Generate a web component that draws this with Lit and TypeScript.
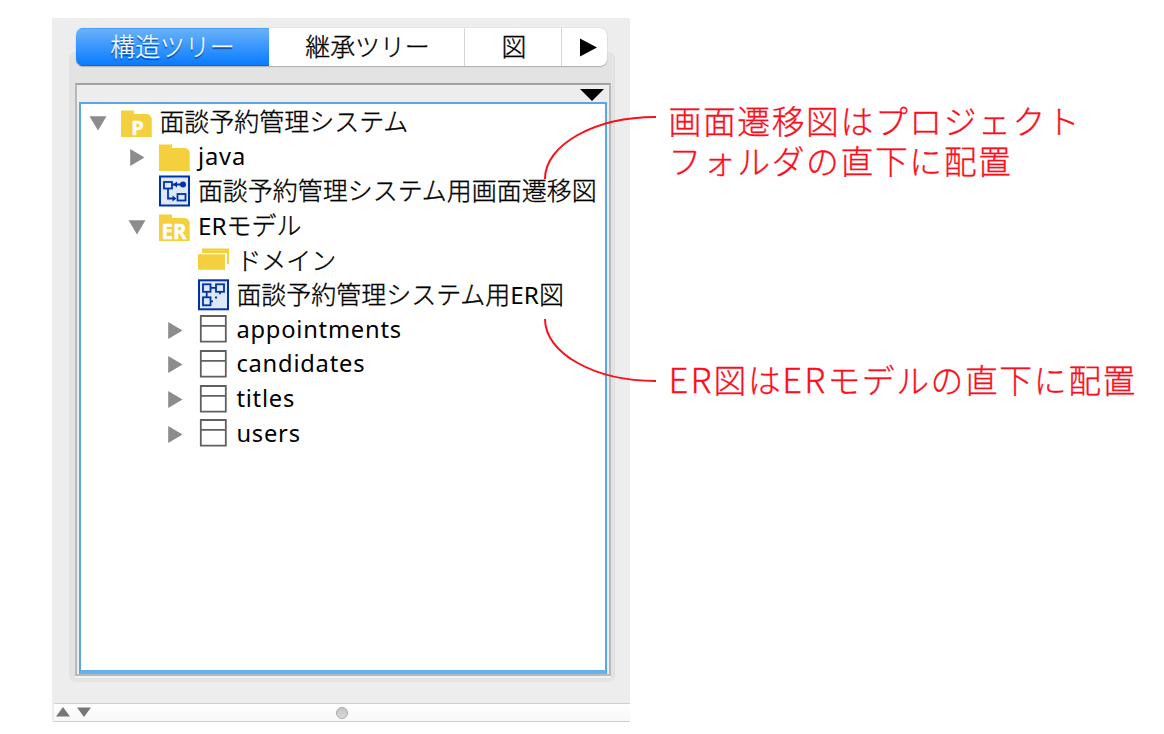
import { LitElement, html, css, svg } from "lit";
import { customElement, property } from "lit/decorators.js";

type IconKind = "project" | "folder" | "er" | "transition" | "domain" | "erdiagram" | "table";

interface Row {
  depth: number;
  arrow: "down" | "right" | "";
  icon: IconKind;
  label: string;
  kind?: string;
}

const ROWS: Row[] = [
  { depth: 0, arrow: "down", icon: "project", label: "面談予約管理システム" },
  { depth: 1, arrow: "right", icon: "folder", label: "java", kind: "java" },
  { depth: 1, arrow: "", icon: "transition", label: "面談予約管理システム用画面遷移図" },
  { depth: 1, arrow: "down", icon: "er", label: "ERモデル" },
  { depth: 2, arrow: "", icon: "domain", label: "ドメイン" },
  { depth: 2, arrow: "", icon: "erdiagram", label: "面談予約管理システム用ER図" },
  { depth: 2, arrow: "right", icon: "table", label: "appointments", kind: "latin" },
  { depth: 2, arrow: "right", icon: "table", label: "candidates", kind: "latin" },
  { depth: 2, arrow: "right", icon: "table", label: "titles", kind: "latin" },
  { depth: 2, arrow: "right", icon: "table", label: "users", kind: "latin" },
];

const folder = svg`<path d="M0 30V3.5H13V7H26Q28.5 7 30.7 11V30Z" fill="#f4cf3e"/>`;
const frame = svg`<rect x="1" y="1" width="29" height="29" fill="#dde8fa" stroke="#0032a6" stroke-width="2"/>`;

const ICONS = {
  project: svg`${folder}<text x="16.6" y="27.5" text-anchor="middle" font-size="20" class="mark">P</text>`,
  folder,
  er: svg`${folder}<text x="15" y="27.5" text-anchor="middle" font-size="21" class="mark" textLength="25" lengthAdjust="spacingAndGlyphs">ER</text>`,
  transition: svg`<g transform="translate(0 -0.5)">${frame}<g fill="none" stroke="#0032a6" stroke-width="1.8"><rect x="5" y="6.5" width="8" height="6.5"/><path d="M13 9H25M9 13V23H16"/><rect x="18.5" y="18.5" width="8" height="6.5"/></g><path fill="#0032a6" d="M14 9L18 6V12ZM13.5 20L17.5 23L13.5 26Z"/><circle cx="24" cy="9" r="3" fill="#0032a6"/></g>`,
  domain: svg`<path d="M4 3.5H31V19H29V8H4Z" fill="#f4cf3e"/><rect y="9.3" width="27" height="15.5" fill="#f4cf3e"/>`,
  erdiagram: svg`<g transform="translate(0 -0.7)">${frame}<g fill="none" stroke="#0032a6" stroke-width="1.8"><rect x="5" y="5" width="7.5" height="7.5"/><rect x="18" y="5" width="8" height="7.5"/><rect x="5" y="18" width="7.5" height="8"/><path d="M12.5 8.5H18M8.7 12.5V18M12.5 22H15M22 12.5V15"/></g><path fill="#0032a6" d="M17 17.3h2v2h-2z"/></g>`,
  table: svg`<path d="M2.8 2H27.8V27.6H2.8ZM2.8 11.8H27.8" fill="none" stroke="#606060" stroke-width="1.8"/>`,
};

@customElement("tree-row")
class TreeRow extends LitElement {
  @property({ attribute: false }) row!: Row;
  static styles = css`
    :host { display: flex; height: 34.6px; align-items: center; }
    .arrow { width: 18px; height: 18px; margin-right: 13.6px; flex: none; }
    .icon { width: 31px; height: 31px; margin-right: 7.8px; flex: none; overflow: visible; }
    .mark { font-family: "Open Sans", sans-serif; font-weight: 700; fill: #fff; stroke: #fff; stroke-width: 0.4px; }
    .label { font: 300 24.97px/30px "Noto Sans CJK JP", sans-serif; height: 34px; color: #000; white-space: nowrap; -webkit-text-stroke: 0.35px #000; }
    .l, .latin, .java { font-family: "Noto Sans", sans-serif; font-weight: 400; -webkit-text-stroke: 0; }
    .l { font-size: 24.3px; line-height: 1; }
    .latin { font-size: 23.7px; line-height: 33px; letter-spacing: 0.78px; }
    .java { font-size: 23.7px; line-height: 33px; letter-spacing: 0.9px; }
    .d1 { margin-left: 38.5px; }
    .d2 { margin-left: 77px; }
  `;
  render() {
    const r = this.row;
    return html`
      <svg class="arrow d${r.depth}" viewBox="0 0 18 18">
        ${r.arrow === "down" ? svg`<path d="M0.5 3.3H17.5L9 17.5Z" fill="#8c8c8c"/>` : ""}
        ${r.arrow === "right" ? svg`<path d="M2.2 1V18L16.5 9.5Z" fill="#8c8c8c"/>` : ""}
      </svg>
      <svg class="icon" viewBox="0 0 31 31">${ICONS[r.icon]}</svg>
      <span class="label ${r.kind ?? ""}">${r.label.split(/(ER)/).map((t) => (t === "ER" ? html`<span class="l">ER</span>` : t))}</span>
    `;
  }
}

@customElement("app-root")
class AppRoot extends LitElement {
  static styles = css`
    :host { display: flex; position: relative; box-sizing: border-box; width: 1164px; height: 734px; padding: 18px 0 0 52px; background: #fff; overflow: hidden; font-family: "Noto Sans CJK JP", sans-serif; font-weight: 300; }
    .window { width: 578px; height: 704px; flex: none; display: flex; flex-direction: column; background: #ededed; }
    .body { display: grid; height: 685px; box-sizing: border-box; padding: 10px 15px 21px 17px; grid-template-rows: 24px 1fr; flex: none; }
    .tabs { display: flex; height: 38px; margin: 0 8px 0 7px; z-index: 1; grid-row: 1; border-radius: 7px; background: #fff; box-shadow: 0 0 1px #aaa, 0 1px 1px #b0b0b0; overflow: hidden; }
    .tab { display: flex; align-items: center; justify-content: center; box-sizing: border-box; border-right: 1px solid #d5d5d5; padding: 0 0 3px 2px; font-size: 24.9px; line-height: 35px; color: #000; white-space: nowrap; -webkit-text-stroke: 0.35px #000; }
    .t1 { width: 193px; background: linear-gradient(#6bb3fa, #067aff); box-shadow: inset 0 1px #4d9ff0, inset 0 -1px #0669dc; color: #fff; border-right: 0; padding-left: 0; -webkit-text-stroke: 0.2px #fff; text-shadow: 0 1.5px 1px #0c4ba0; }
    .t2 { width: 196px; }
    .t3 { width: 97px; padding-left: 2px; }
    .t4 { flex: 1; border-right: 0; padding-bottom: 0; }
    .play { width: 17px; height: 19px; margin-left: 6px; }
    .group { box-sizing: border-box; padding: 30px 3px 6px 6px; border: 1px solid #dfdfdf; border-width: 1px 1px 0 0; border-radius: 7px; background: #e3e3e3; }
    .pane { height: 100%; box-sizing: border-box; border: 2px solid #b9b9b9; border-top-color: #a2a2a2; background: #ededed; display: flex; flex-direction: column; box-shadow: 0 2px #f2f2f2; padding: 0 2px 0 2px; }
    .head { height: 17px; flex: none; display: flex; justify-content: flex-end; align-items: flex-end; padding-right: 3px; }
    .drop { width: 24px; height: 12px; margin-bottom: 1px; }
    .tree { flex: 1; border: 2px solid #5ba6e6; border-bottom: 4px solid #64b0f3; background: #fff; padding: 1px 0 0 8px; }
    .foot { height: 19px; box-sizing: border-box; margin-left: 2px; border-top: 1px solid #cfcfcf; border-bottom: 1px solid #cfcfcf; background: linear-gradient(#fff, #f7f7f7); display: flex; align-items: center; padding-left: 2px; }
    .up { width: 36px; height: 10px; margin-bottom: 2px; }
    .knob { width: 12px; height: 12px; box-sizing: border-box; margin-left: 244px; border: 1px solid #aaa; border-radius: 50%; background: linear-gradient(#c4c4c4, #dadada); }
    .notes { display: flex; flex-direction: column; margin-left: 38.5px; padding-top: 82px; color: #fb0d1b; font-size: 32.8px; line-height: 40px; letter-spacing: 1.6px; white-space: nowrap; -webkit-text-stroke: 0.3px #fb0d1b; }
    .second { margin-top: 179px; }
    .er { font-size: 34.6px; line-height: 1; letter-spacing: 2.1px; }
    .lines { position: absolute; left: 0; top: 0; width: 1164px; height: 734px; z-index: 2; }
  `;
  render() {
    return html`
      <div class="window">
        <div class="body">
          <div class="tabs">
            <div class="tab t1">構造ツリー</div>
            <div class="tab t2">継承ツリー</div>
            <div class="tab t3">図</div>
            <div class="tab t4"><svg class="play" viewBox="0 0 17 19"><path d="M0 0.5V18.5L17 9.5Z"/></svg></div>
          </div>
          <div class="group">
            <div class="pane">
              <div class="head"><svg class="drop" viewBox="0 0 24 12"><path d="M0 0H24L12 12Z"/></svg></div>
              <div class="tree">${ROWS.map((r) => html`<tree-row .row=${r}></tree-row>`)}</div>
            </div>
          </div>
        </div>
        <div class="foot">
          <svg class="up" viewBox="0 0 36 10"><path d="M0 9.5L7 0L14 9.5ZM21 0.5H35L28 10Z" fill="#777"/></svg>
          <span class="knob"></span>
        </div>
      </div>
      <div class="notes">
        <div>画面遷移図はプロジェクト</div>
        <div>フォルダの直下に配置</div>
        <div class="second"><span class="er">ER</span>図は<span class="er">ER</span>モデルの直下に配置</div>
      </div>
      <svg class="lines" viewBox="0 0 1164 734" fill="none" stroke="#fb0d1b" stroke-width="2">
        <path d="M545 179C545 145 594 117 656 117"/>
        <path d="M545 319C545 353 594 381 656 381"/>
      </svg>
    `;
  }
}
